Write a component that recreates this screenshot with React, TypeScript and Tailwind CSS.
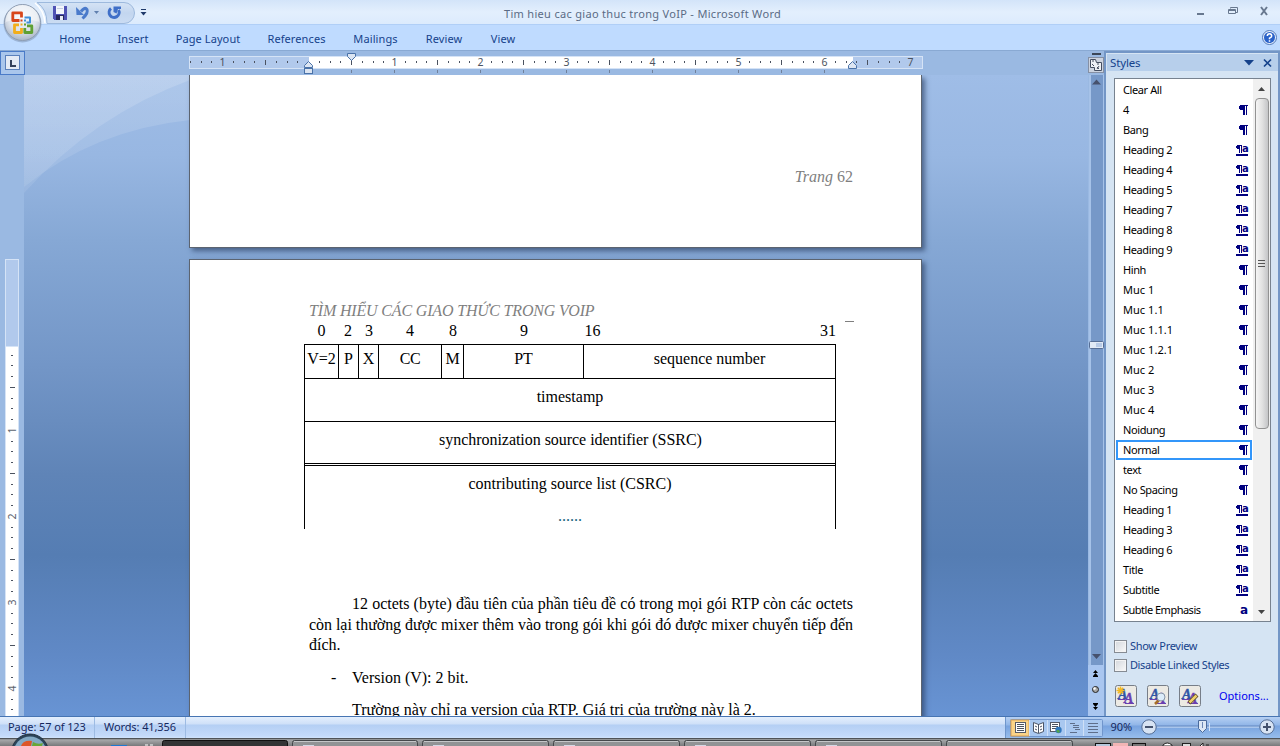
import React from "react";

const tabs = [
  { label: "Home", w: "w-[58px]" },
  { label: "Insert", w: "w-[58px]" },
  { label: "Page Layout", w: "w-[92px]" },
  { label: "References", w: "w-[85px]" },
  { label: "Mailings", w: "w-[73px]" },
  { label: "Review", w: "w-[64px]" },
  { label: "View", w: "w-[54px]" },
];

type Kind = "none" | "para" | "linked" | "char";
const styleRows: [string, Kind][] = [
  ["Clear All", "none"],
  ["4", "para"],
  ["Bang", "para"],
  ["Heading 2", "linked"],
  ["Heading 4", "linked"],
  ["Heading 5", "linked"],
  ["Heading 7", "linked"],
  ["Heading 8", "linked"],
  ["Heading 9", "linked"],
  ["Hinh", "para"],
  ["Muc 1", "para"],
  ["Muc 1.1", "para"],
  ["Muc 1.1.1", "para"],
  ["Muc 1.2.1", "para"],
  ["Muc 2", "para"],
  ["Muc 3", "para"],
  ["Muc 4", "para"],
  ["Noidung", "para"],
  ["Normal", "para"],
  ["text", "para"],
  ["No Spacing", "para"],
  ["Heading 1", "linked"],
  ["Heading 3", "linked"],
  ["Heading 6", "linked"],
  ["Title", "linked"],
  ["Subtitle", "linked"],
  ["Subtle Emphasis", "char"],
];

function KindIcon({ kind }: { kind: Kind }) {
  if (kind === "para")
    return (
      <svg width="9" height="10" viewBox="0 0 9 10" fill="#00007f" shapeRendering="crispEdges">
        <path d="M1 0h8v1H8v9H7V1H6v9H4V5H1V4H0V1h1z" />
      </svg>
    );
  if (kind === "linked")
    return (
      <span className="flex h-[11px] items-start border-b-2 border-[#00007f]">
        <svg width="6" height="8" viewBox="0 0 6 8" fill="#00007f" shapeRendering="crispEdges">
          <path d="M1 0h5v8H5V1H4v7H3V4H1V3H0V1h1z" />
        </svg>
        <span className="h-[8px] w-[6px] font-['DejaVu_Sans'] text-[10px] font-bold leading-[7px] text-[#00007f]">a</span>
      </span>
    );
  if (kind === "char")
    return <span className="font-['DejaVu_Sans'] text-[12px] font-bold leading-none text-[#00007f]">a</span>;
  return null;
}

function OfficeButton() {
  return (
    <svg className="absolute left-[2px] top-[2px]" width="41" height="42" viewBox="0 0 41 42">
      <defs>
        <radialGradient id="orb" cx="50%" cy="35%" r="65%">
          <stop offset="0" stopColor="#f4f7fb" />
          <stop offset="0.6" stopColor="#dde3ec" />
          <stop offset="1" stopColor="#aab6c8" />
        </radialGradient>
      </defs>
      <circle cx="20.5" cy="21.5" r="19" fill="#7f95b5" opacity="0.55" />
      <circle cx="20.5" cy="20.5" r="18" fill="url(#orb)" stroke="#8e9db3" />
      <path d="M3.500 20 A17 17 0 0 1 37.500 20 Q20 14 3.500 20z" fill="#fff" opacity="0.45" />
      <g fill="none" strokeWidth="2.800" strokeLinejoin="round">
        <path d="M17.500 18.500H10.800V10.800H19.500V15.500" stroke="#d8461a" />
        <path d="M22.500 15.500H28V20.500H24.500" stroke="#3f8fd8" strokeWidth="2" />
        <path d="M17 22.800H12.500V30.500H19.500V26" stroke="#f2ae1c" />
        <path d="M22.800 26V30.500H29.800V23.800H25" stroke="#5fa033" />
      </g>
      <rect x="18.500" y="17.500" width="2" height="2" fill="#d8461a" />
      <rect x="22" y="17.500" width="2" height="2" fill="#3f8fd8" />
      <rect x="18.500" y="21.500" width="2" height="2" fill="#f2ae1c" />
      <rect x="22" y="21.500" width="2" height="2" fill="#5fa033" />
    </svg>
  );
}

function QuickAccess() {
  return (
    <svg className="absolute left-[32px] top-0" width="120" height="26" viewBox="0 0 120 26">
      <defs>
        <linearGradient id="pill" x1="0" y1="0" x2="0" y2="1">
          <stop offset="0" stopColor="#d5e3f5" />
          <stop offset="0.5" stopColor="#c3d6ef" />
          <stop offset="1" stopColor="#cbdcf3" />
        </linearGradient>
      </defs>
      <path d="M5 2.500H92A10.500 10.500 0 0 1 92 23.500H15Q15 9 5 2.500z" fill="url(#pill)" stroke="#9db9dd" />
      <path d="M3 3Q12 10 13 23" fill="none" stroke="#fff" strokeWidth="1.500" />
      <g shapeRendering="crispEdges">
        <path d="M21 6h14v14H22l-1-1z" fill="#4f52b4" />
        <rect x="24" y="6" width="8" height="8" fill="#f2f5fb" />
        <rect x="25" y="8" width="6" height="1" fill="#c4cbe0" />
        <rect x="24" y="15" width="8" height="5" fill="#26285e" />
        <rect x="28" y="16" width="3" height="4" fill="#e8ecf6" />
      </g>
      <path d="M49 11.500Q53 6.500 55 9.500Q56.500 13 50.500 18.500" fill="none" stroke="#4a7acb" strokeWidth="3" />
      <path d="M44 7l0.500 8h7.500z" fill="#4a7acb" />
      <path d="M62 11h5l-2.500 3z" fill="#5f7fae" />
      <path d="M79 8.500A5 5 0 1 0 86.500 10" fill="none" stroke="#3f6fc8" strokeWidth="3" />
      <path d="M81.500 6.500h7.500v2.500l-3 0-1.500 4.500-3-1.500z" fill="#3f6fc8" />
      <path d="M109 9.500h5" stroke="#1f3a6b" />
      <path d="M108.500 12h6l-3 3.500z" fill="#1f3a6b" />
    </svg>
  );
}

function TitleBar() {
  return (
    <header className="relative flex h-[51px] shrink-0 flex-col">
      <div className="flex h-[25px] items-center border-b border-[#b0cff7] bg-gradient-to-b from-[#d3e4f9] via-[#e3effd] to-[#dcebfd]">
        <div className="w-[504px]" />
        <h1 className="grow whitespace-nowrap pt-[5px] text-[11px] tracking-[0.31px] text-[#5a6b85]">Tim hieu cac giao thuc trong VoIP - Microsoft Word</h1>
        <svg width="83" height="25" viewBox="0 0 83 25" fill="none" stroke="#68788f">
          <path d="M0 14h7" strokeWidth="2" />
          <path d="M33.500 8.500v-1h7v5h-2M31.500 9.500h7v4h-7zM31.500 10.500h7" />
          <path d="M64 7l6 8M70 7l-6 8" strokeWidth="2" />
        </svg>
      </div>
      <nav className="flex h-[26px] items-center border-b border-[#89a9d3] bg-[#bfdbff] pl-[46px] pt-[3px] text-[11px] text-[#15428b]">
        {tabs.map((t) => (
          <span key={t.label} className={`${t.w} shrink-0 whitespace-nowrap text-center tracking-[0.1px]`}>
            {t.label}
          </span>
        ))}
        <span className="grow" />
        <svg className="mb-1 mr-[3px]" width="15" height="15" viewBox="0 0 15 15">
          <circle cx="7.500" cy="7.500" r="7" fill="#e9f1fc" stroke="#5077b8" />
          <circle cx="7.500" cy="7.500" r="5.500" fill="#2a62c9" />
          <path d="M5.300 6Q5.300 3.700 7.500 3.700T9.700 6Q9.700 7 7.500 8.200V9.300M7.500 10.200v1.600" stroke="#fff" strokeWidth="1.500" fill="none" />
        </svg>
      </nav>
      <QuickAccess />
      <OfficeButton />
    </header>
  );
}

const eighth = 10.75;

function HorizontalRuler() {
  const marks = [];
  for (let i = -11; i <= 56; i++) {
    if (i === 0) continue;
    const x = Math.round(308.6 + i * eighth - 0.5);
    if (i % 8 === 0)
      marks.push(
        <text key={i} x={x + 0.5} y="66" textAnchor="middle" fontSize="10.5" fill="#4b5360">
          {Math.abs(i / 8)}
        </text>
      );
    else if (i % 4 === 0) marks.push(<rect key={i} x={x} y="60" width="1" height="5" fill="#4b5260" />);
    else marks.push(<rect key={i} x={x} y="61" width="1" height="2" fill="#4b5260" />);
  }
  const stops = [];
  for (let i = 1; i <= 12; i++) stops.push(<rect key={i} x={Math.round(308.1 + i * 43)} y="70" width="1" height="3" fill="#70809a" />);
  return (
    <svg className="block shrink-0" width="1088" height="24" viewBox="0 51 1088 24" fontFamily="Noto Sans, sans-serif">
      <rect x="0" y="51" width="1088" height="24" fill="#9ab9e2" />
      <rect x="0.5" y="51.5" width="24" height="23" fill="#a9c6ec" stroke="#4a7bc8" />
      <rect x="5.500" y="55.500" width="14" height="14" fill="#e3eaf5" stroke="#5a80bb" />
      <path d="M11 60v6h5" fill="none" stroke="#33415c" strokeWidth="2" />
      <rect x="189.500" y="56.500" width="733" height="12" fill="#b1c9ec" stroke="#d5e3f6" />
      <rect x="309" y="57" width="544" height="11" fill="#fff" />
      {marks}
      {stops}
      <g fill="#dce5f2" stroke="#4a72a8">
        <path d="M347.500 53.500h8v3l-4 4-4-4z" />
        <path d="M308.500 61.500l4 4v2h-8v-2z" />
        <rect x="304.500" y="68.500" width="8" height="5" />
        <path d="M852.500 61.500l4 4v3h-8v-3z" />
      </g>
    </svg>
  );
}

function VerticalRuler() {
  const marks = [];
  for (let i = 1; i <= 34; i++) {
    const y = Math.round(344.4 + i * eighth - 0.5);
    if (i % 8 === 0)
      marks.push(
        <text key={i} x="0" y="0" transform={`translate(16 ${y + 0.5}) rotate(-90)`} textAnchor="middle" fontSize="10.5" fill="#5c6470">
          {i / 8}
        </text>
      );
    else if (i % 4 === 0) marks.push(<rect key={i} x="10" y={y} width="5" height="1" fill="#4b5260" />);
    else marks.push(<rect key={i} x="11" y={y} width="2" height="1" fill="#4b5260" />);
  }
  return (
    <svg className="block shrink-0" width="24" height="641" viewBox="0 75 24 641" fontFamily="Noto Sans, sans-serif">
      <rect x="0" y="75" width="24" height="641" fill="#9ab9e2" />
      <rect x="5.500" y="259.500" width="13" height="470" fill="#fff" stroke="#d5e3f6" />
      <rect x="6" y="260" width="12" height="86" fill="#b1c9ec" />
      <rect x="6" y="346" width="12" height="1" fill="#d5e3f6" />
      {marks}
    </svg>
  );
}

function PacketTable() {
  return (
    <div className="ml-[114px] w-[532px] text-[16px]">
      <div className="flex h-[24px] items-start text-center leading-[21px]">
        <span className="w-[35px]">0</span>
        <span className="w-[18px]">2</span>
        <span className="w-[24px]">3</span>
        <span className="w-[58px]">4</span>
        <span className="w-[28px]">8</span>
        <span className="w-[114px]">9</span>
        <span className="w-[23px]">16</span>
        <span className="grow text-right">31</span>
      </div>
      <div className="border-x border-t border-black text-center">
        <div className="flex h-[34px] border-b border-black leading-[27px]">
          <span className="w-[34px] border-r border-black tracking-[-0.1px]">V=2</span>
          <span className="w-[20px] border-r border-black">P</span>
          <span className="w-[20px] border-r border-black">X</span>
          <span className="w-[63px] border-r border-black tracking-[-0.5px]">CC</span>
          <span className="w-[22px] border-r border-black">M</span>
          <span className="w-[120px] border-r border-black">PT</span>
          <span className="grow">sequence number</span>
        </div>
        <div className="h-[43px] border-b border-black leading-[36px]">timestamp</div>
        <div className="h-[44px] border-b-[3px] border-double border-black pl-[1px] leading-[36px] tracking-[-0.04px]">synchronization source identifier (SSRC)</div>
        <div className="h-[63px] pt-[6px] leading-[24px]">
          <p>contributing source list (CSRC)</p>
          <p className="mt-[8px] text-[#17657d]">......</p>
        </div>
      </div>
    </div>
  );
}

function Canvas() {
  return (
    <div className="relative flex w-[1064px] flex-col overflow-hidden bg-[linear-gradient(180deg,#9fbde7_0px,#98b7e2_80px,#86a8d5_165px,#7396c7_290px,#5f84b7_400px,#557db3_480px,#6089c6_580px,#6894d4_641px)] pl-[165px]">
      <svg className="absolute left-0 top-0" width="166" height="190" viewBox="0 0 166 190">
        <defs>
          <linearGradient id="swoosh" x1="0" y1="0" x2="0" y2="1">
            <stop offset="0" stopColor="#fff" stopOpacity="0.16" />
            <stop offset="1" stopColor="#fff" stopOpacity="0.08" />
          </linearGradient>
        </defs>
        <path d="M0 0H166V5Q70 40 0 118z" fill="url(#swoosh)" />
        <path d="M0 0H166V45Q70 55 0 112z" fill="url(#swoosh)" />
      </svg>
      <section className="relative h-[173px] w-[733px] shrink-0 border-x border-b border-[#5c6470] bg-white pt-[90px] font-['Liberation_Serif'] text-[16px] leading-[24px] text-[#7f7f7f] shadow-[3px_3px_5px_rgba(40,60,95,0.65)]">
        <p className="pr-[68px] text-right"><i>Trang</i> 62</p>
      </section>
      <article className="relative mt-[11px] h-[480px] w-[733px] shrink-0 border border-[#5c6470] bg-white font-['Liberation_Serif'] text-[16px] text-black shadow-[3px_3px_5px_rgba(40,60,95,0.65)]">
        <div className="flex h-[60px] justify-between pl-[119px] pr-[67px] pt-[40px] text-[#7f7f7f]">
          <p className="whitespace-nowrap italic leading-[21px] tracking-[-0.16px]">TÌM HIỂU CÁC GIAO THỨC TRONG VOIP</p>
          <span className="mt-[21px] h-px w-[9px] bg-[#7f7f7f]" />
        </div>
        <PacketTable />
        <div className="ml-[119px] mt-[65px] w-[544px] leading-[20.5px]">
          <p className="whitespace-nowrap pl-[43px] [text-align-last:justify]">12 octets (byte) đầu tiên của phần tiêu đề có trong mọi gói RTP còn các octets</p>
          <p className="whitespace-nowrap tracking-[-0.05px] [text-align-last:justify]">còn lại thường được mixer thêm vào trong gói khi gói đó được mixer chuyển tiếp đến</p>
          <p>đích.</p>
          <p className="mt-[12px] flex"><span className="w-[43px] pl-[22px]">-</span>Version (V): 2 bit.</p>
          <p className="mt-[12px] pl-[43px]">Trường này chỉ ra version của RTP. Giá trị của trường này là 2.</p>
        </div>
      </article>
    </div>
  );
}

function DocumentScrollbar() {
  return (
    <svg className="block shrink-0" width="18" height="665" viewBox="1088 51 18 665">
      <rect x="1088" y="51" width="18" height="665" fill="#9ab9e2" />
      <rect x="1088" y="665" width="16" height="51" fill="#a9c6f0" />
      <rect x="1091" y="75" width="12" height="590" fill="#7698c8" />
      <rect x="1089" y="75" width="2" height="590" fill="#a6c2e8" />
      <rect x="1103" y="75" width="1" height="590" fill="#a6c2e8" />
      <rect x="1104" y="51" width="2" height="665" fill="#7396c6" />
      <rect x="1092" y="53" width="9" height="2" fill="#3b4658" />
      <rect x="1088.500" y="57.500" width="15" height="15" fill="#ccd3df" stroke="#8590a5" />
      <path d="M1090.500 59.500h5l1 3h5v8h-7v-3h-4z" fill="#eef1f6" stroke="#454e61" />
      <path d="M1093 59v3M1098 62v3M1092 64l2 2M1097 67l2 2M1099 66l-2 3" fill="none" stroke="#454e61" />
      <path d="M1092 84.500l4.500-5 4.500 5zM1092 654l4.500 5 4.500-5z" fill="#46516d" />
      <rect x="1089.500" y="341.500" width="14" height="7" rx="1" fill="#e1eaf6" stroke="#566e96" />
      <rect x="1096" y="343" width="6" height="4" fill="#b8cbe7" />
      <path d="M1093 673l2.500-3 2.500 3zM1093 676l2.500-3 2.500 3zM1093 704l2.500 3 2.500-3zM1093 707l2.500 3 2.500-3z" fill="#000" />
      <path d="M1093 676.500h5M1093 703.500h5" stroke="#000" />
      <circle cx="1095.500" cy="689.500" r="3" fill="#a8a8a8" stroke="#222" />
      <circle cx="1094.500" cy="688.500" r="1.200" fill="#fff" />
    </svg>
  );
}

function PaneButton({ mark }: { mark: "new" | "inspect" | "manage" }) {
  return (
    <svg width="22" height="22" viewBox="0 0 22 22">
      <rect x="0.5" y="0.5" width="21" height="21" rx="2" fill="#eceae4" stroke="#777e88" />
      <g fontFamily="Liberation Serif, serif" fontStyle="italic" fontWeight="bold">
        <text x="3" y="14" fontSize="14" fill="#2f55a5" stroke="#2f55a5" strokeWidth="0.4">A</text>
        <text x="9" y="18" fontSize="14" fill="#6a3fb0" stroke="#6a3fb0" strokeWidth="0.4">A</text>
      </g>
      <path d="M3 14.500h7M10 18.500h9" stroke="#6a3fb0" />
      {mark === "new" && <path d="M5.500 1.500v8M1.500 5.500h8M2.800 2.800l5.400 5.400M8.200 2.800L2.800 8.200" stroke="#f2b822" strokeWidth="1.500" />}
      {mark === "inspect" && (
        <>
          <path d="M12 15l-4 4" stroke="#a66e28" strokeWidth="2.500" />
          <circle cx="14" cy="12" r="4" fill="#dcecfa" stroke="#8694a8" />
        </>
      )}
      {mark === "manage" && (
        <>
          <path d="M18 10l-8 8" stroke="#5b4b22" strokeWidth="4" />
          <path d="M17.500 10.500l-7 7" stroke="#f0cf6a" strokeWidth="2.500" />
        </>
      )}
    </svg>
  );
}

function StylesPane() {
  return (
    <aside className="flex w-[174px] flex-col border-r-2 border-t-2 border-[#7396c6] bg-[#d5e4f3] font-['Noto_Sans'] text-[11px]">
      <div className="ml-px mt-[1px] flex h-[17px] shrink-0 items-center bg-[#b7cfeb] pl-[3px] pr-[6px] text-[#15428b]">
        <h2 className="grow text-[11.500px] tracking-[-0.15px]">Styles</h2>
        <svg width="28" height="10" viewBox="0 0 28 10">
          <path d="M0 2h10L5 7.500z" fill="#15428b" />
          <path d="M20 1.500l7 7M27 1.500l-7 7" stroke="#15428b" strokeWidth="1.700" />
        </svg>
      </div>
      <div className="ml-[8px] mt-[7px] flex h-[544px] w-[157px] shrink-0 border border-[#77828f] bg-white">
        <ul className="w-[138px] pt-px text-black">
          {styleRows.map(([name, kind]) => (
            <li
              key={name}
              className={`ml-px flex h-[20px] w-[136px] items-center justify-between border-2 pl-[5px] pr-[2px] ${
                name === "Normal" ? "border-[#3296fa]" : "border-transparent"
              }`}
            >
              <span className={`whitespace-nowrap ${name.startsWith("Muc") ? "tracking-[0.05px]" : name === "Subtle Emphasis" ? "tracking-[-0.5px]" : "tracking-[-0.4px]"}`}>{name}</span>
              <KindIcon kind={kind} />
            </li>
          ))}
        </ul>
        <div className="flex w-[17px] flex-col items-center bg-[#f0f0f0]">
          <svg className="h-[19px] w-[15px] shrink-0" viewBox="0 0 15 19"><path d="M4 12l3.500-4 3.500 4z" fill="#444" /></svg>
          <div className="flex h-[331px] w-[14px] shrink-0 flex-col items-center justify-center gap-[2px] rounded-sm border border-[#929292] bg-gradient-to-r from-[#f5f5f5] via-[#e2e2e2] to-[#c4c5c7]">
            <span className="h-px w-[7px] bg-[#555]" />
            <span className="h-px w-[7px] bg-[#555]" />
            <span className="h-px w-[7px] bg-[#555]" />
          </div>
          <span className="grow" />
          <svg className="h-[18px] w-[15px] shrink-0" viewBox="0 0 15 18"><path d="M4 7l3.500 4L11 7z" fill="#444" /></svg>
        </div>
      </div>
      <div className="flex flex-col pl-[8px] pt-[15px] text-[#15428b]">
        <label className="flex h-[19px] items-center gap-[3px] whitespace-nowrap tracking-[-0.3px]">
          <span className="size-[13px] border border-[#858b93] bg-gradient-to-br from-[#d3d7dc] to-[#fafafa] shadow-[inset_0_0_0_1px_#f4f4f4]" />
          Show Preview
        </label>
        <label className="flex h-[19px] items-center gap-[3px] whitespace-nowrap tracking-[-0.42px]">
          <span className="size-[13px] border border-[#858b93] bg-gradient-to-br from-[#d3d7dc] to-[#fafafa] shadow-[inset_0_0_0_1px_#f4f4f4]" />
          Disable Linked Styles
        </label>
      </div>
      <div className="mt-[10px] flex items-center gap-[10px] pl-[9px]">
        <PaneButton mark="new" />
        <PaneButton mark="inspect" />
        <PaneButton mark="manage" />
        <span className="ml-[8px] text-[#0000f0]">Options...</span>
      </div>
    </aside>
  );
}

function StatusBar() {
  return (
    <footer className="flex h-[22px] shrink-0 border-t border-[#4775b3] bg-[linear-gradient(180deg,#e4effd_0px,#cfe0f8_7px,#b4cff4_8px,#c4dafa_19px,#d0e3fc_21px)] text-[11px] text-[#15285e]">
      <span className="flex w-[95px] items-center whitespace-nowrap border-r border-[#9dbbe3] pl-[8px] tracking-[-0.1px]">Page: 57 of 123</span>
      <span className="flex w-[91px] items-center whitespace-nowrap border-r border-[#9dbbe3] pl-[9px] tracking-[-0.1px]">Words: 41,356</span>
      <span className="grow" />
      <div className="flex w-[275px] items-center border-l border-[#6f96cb] bg-[linear-gradient(180deg,#b6d0f3_0px,#91b6e8_8px,#78a3df_9px,#97bdec_21px)]">
        <svg width="274" height="21" viewBox="1006 717 274 21">
          <rect x="1010.500" y="719.500" width="92" height="17" rx="1" fill="#a9c8f0" stroke="#7095cc" />
          <rect x="1011" y="720" width="18" height="16" fill="#fbd487" stroke="#d8a256" />
          <path d="M1029.500 720v16M1047.500 720v16M1065.500 720v16M1083.500 720v16" stroke="#cfe0f7" />
          <rect x="1015.500" y="722.500" width="10" height="10" fill="#fff" stroke="#565b66" />
          <path d="M1017 724.500h7M1017 726.500h7M1017 728.500h7M1017 730.500h7" stroke="#4c535e" />
          <path d="M1033.500 722.500l5 2 5-2v9l-5 2-5-2zM1038.500 724v9" fill="#fff" stroke="#4b5568" />
          <path d="M1035 726l2 1M1035 729l2 1M1042 726l-2 1M1042 729l-2 1" stroke="#4b5568" />
          <rect x="1050.500" y="722.500" width="9" height="9" fill="#fff" stroke="#565b66" />
          <path d="M1052 724.500h6M1052 726.500h6M1052 728.500h4" stroke="#4c535e" />
          <circle cx="1058.500" cy="730" r="3.200" fill="#3177bd" />
          <path d="M1056 731q3-3 4 1l-2 1z" fill="#4ea34f" />
          <path d="M1070 723.500h5M1073 725.500h6M1073 727.500h6M1075 729.500h5M1070 732.500h7M1088 723.500h10M1088 726.500h10M1088 729.500h10M1088 732.500h10" stroke="#5e6e8a" />
          <text x="1110.500" y="731" fontFamily="Noto Sans, sans-serif" fontSize="11" fill="#15285e">90%</text>
          <path d="M1157 727h102" stroke="#d5e4f8" />
          <path d="M1157 726h102" stroke="#6c8fc4" />
          <g fill="#d7e3f3" stroke="#566f96">
            <circle cx="1149" cy="727" r="7.200" />
            <circle cx="1267" cy="727" r="7.200" />
          </g>
          <path d="M1145 727h8M1263 727h8M1267 723v8" stroke="#44526d" strokeWidth="2" />
          <path d="M1209.500 723v8" stroke="#d5e4f8" />
          <path d="M1198.500 720.500h8v8l-4 4-4-4z" fill="#dce7f5" stroke="#4a6a9c" />
          <path d="M1202.500 722v6" stroke="#6b87b5" />
        </svg>
      </div>
    </footer>
  );
}

function Taskbar() {
  return (
    <svg className="absolute bottom-0 left-0" width="1280" height="13" viewBox="0 733 1280 13">
      <defs>
        <linearGradient id="bar" x1="0" y1="0" x2="0" y2="1">
          <stop offset="0" stopColor="#5f6266" />
          <stop offset="0.25" stopColor="#a5a7a9" />
          <stop offset="1" stopColor="#77797b" />
        </linearGradient>
      </defs>
      <rect x="0" y="738" width="1280" height="8" fill="url(#bar)" />
      <rect x="0" y="738" width="1280" height="1" fill="#4f5358" />
      <circle cx="30" cy="752.500" r="18.500" fill="#2b4459" stroke="#21313f" />
      <circle cx="30" cy="753" r="16.500" fill="#82a9c4" />
      <path d="M21 746q2-6 11-5l-1 5z" fill="#dd5628" />
      <path d="M33 742q5 3 10 1l-1 3h-10z" fill="#69a637" />
      <rect x="111" y="745" width="16" height="1" fill="#1e78d2" />
      <path d="M145 745h3M150 745h3" stroke="#fff" />
      <rect x="162.500" y="740.500" width="125" height="14" rx="2" fill="#333536" stroke="#111" />
      <g fill="#919395" stroke="#45484b">
        <rect x="292.500" y="740.500" width="125" height="14" rx="2" />
        <rect x="422.500" y="740.500" width="126" height="14" rx="2" />
        <rect x="553.500" y="740.500" width="126" height="14" rx="2" />
        <rect x="684.500" y="740.500" width="126" height="14" rx="2" />
        <rect x="815.500" y="740.500" width="126" height="14" rx="2" />
        <rect x="946.500" y="740.500" width="126" height="14" rx="2" />
      </g>
      <path d="M294 741.500h122M424 741.500h123M555 741.500h123M686 741.500h123M817 741.500h123M948 741.500h123" stroke="#c4c6c8" />
      <path d="M303 745.500h11M433 745.500h11M564 745.500h11M695 745.500h11M826 745.500h11" stroke="#d4d8e5" />
      <rect x="1095.500" y="743.500" width="15" height="8" fill="#b6c8dc" stroke="#111" />
      <rect x="1113" y="743" width="15" height="3" fill="#f2b5b5" />
      <rect x="1132.500" y="743.500" width="13" height="8" fill="#777" stroke="#111" />
      <path d="M1163 746v-1q4-4 9 0v1z" fill="#fff" stroke="#222" />
      <rect x="1182.500" y="743.500" width="8" height="8" fill="#ddd" stroke="#222" />
      <path d="M1200 746l3-3v3M1206 745h3" stroke="#222" fill="#fff" />
    </svg>
  );
}

export default function App() {
  return (
    <div className="relative flex h-[746px] w-[1280px] flex-col overflow-hidden bg-[#777] font-['Noto_Sans',sans-serif]">
      <TitleBar />
      <main className="flex h-[665px] shrink-0 overflow-hidden">
        <div className="flex w-[1088px] shrink-0 flex-col">
          <HorizontalRuler />
          <div className="flex h-[641px] overflow-hidden">
            <VerticalRuler />
            <Canvas />
          </div>
        </div>
        <DocumentScrollbar />
        <StylesPane />
      </main>
      <StatusBar />
      <Taskbar />
    </div>
  );
}
